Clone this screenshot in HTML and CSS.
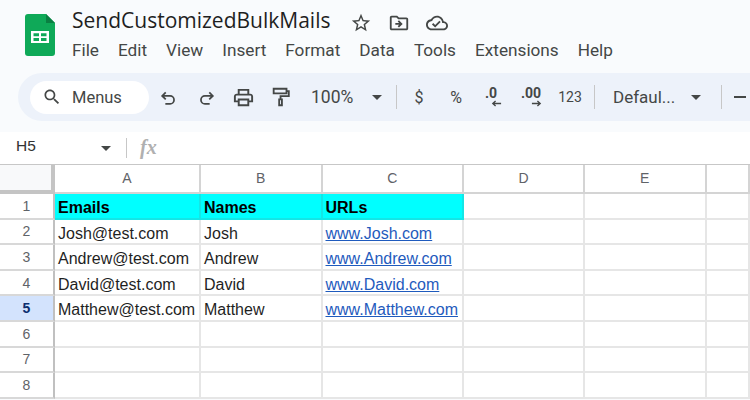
FILE: index.html
```html
<!DOCTYPE html>
<html lang="en">
<head>
    <meta charset="UTF-8">
    <title>SendCustomizedBulkMails</title>
    <link rel="stylesheet" href="styles.css">
</head>
<body>
    <header class="top">
        <svg class="logo" viewBox="0 0 30 42">
            <path d="M3 0h18l9 9v30a3 3 0 0 1-3 3H3a3 3 0 0 1-3-3V3a3 3 0 0 1 3-3z" fill="#0fa958"/>
            <path d="M21 0l9 9h-9z" fill="#0a7f42"/>
            <path d="M6 17h18v12H6zM8.500 19.200v3h5.500v-3zM16 19.200v3h5.500v-3zM8.500 24v3h5.500v-3zM16 24v3h5.500v-3z" fill="#fff" fill-rule="evenodd"/>
        </svg>
        <div class="top-text">
            <div class="title-row">
                <span class="doc-title">SendCustomizedBulkMails</span>
                <svg class="title-icon star" viewBox="0 0 24 24"><path d="M22 9.240l-7.190-.620L12 2 9.190 8.630 2 9.240l5.460 4.730L5.820 21 12 17.270 18.180 21l-1.630-7.030L22 9.240zM12 15.400l-3.760 2.270 1-4.280-3.320-2.880 4.380-.380L12 6.100l1.710 4.040 4.380.380-3.320 2.880 1 4.280L12 15.400z"/></svg>
                <svg class="title-icon" viewBox="0 0 24 24"><path d="M20 6h-8l-2-2H4c-1.100 0-1.990.900-1.990 2L2 18c0 1.100.900 2 2 2h16c1.100 0 2-.900 2-2V8c0-1.100-.900-2-2-2zm0 12H4V6h5.170l2 2H20v10zm-8.010-9l-1.410 1.410L12.160 12H8v2h4.160l-1.590 1.590L11.990 17 16 13.010 11.990 9z"/></svg>
                <svg class="title-icon" viewBox="0 0 24 24"><path d="M19.350 10.040C18.670 6.590 15.640 4 12 4 9.110 4 6.600 5.640 5.350 8.040 2.340 8.360 0 10.910 0 14c0 3.310 2.690 6 6 6h13c2.760 0 5-2.240 5-5 0-2.640-2.050-4.780-4.650-4.960zM19 18H6c-2.210 0-4-1.790-4-4 0-2.050 1.530-3.760 3.560-3.970l1.070-.110.500-.950C8.080 7.140 9.940 6 12 6c2.620 0 4.880 1.860 5.390 4.430l.300 1.500 1.530.110c1.560.100 2.780 1.410 2.780 2.960 0 1.650-1.350 3-3 3zm-9-3.820l-2.090-2.090L6.500 13.500 10 17l6.010-6.010-1.410-1.410z"/></svg>
            </div>
            <nav class="menu">
                <span>File</span>
                <span>Edit</span>
                <span>View</span>
                <span>Insert</span>
                <span>Format</span>
                <span>Data</span>
                <span>Tools</span>
                <span>Extensions</span>
                <span>Help</span>
            </nav>
        </div>
    </header>

    <div class="toolbar">
        <div class="search">
            <svg class="search-icon" viewBox="0 0 24 24"><path d="M15.500 14h-.790l-.280-.270C15.410 12.590 16 11.110 16 9.500 16 5.910 13.090 3 9.500 3S3 5.910 3 9.500 5.910 16 9.500 16c1.610 0 3.090-.590 4.230-1.570l.270.280v.790l5 4.990L20.490 19l-4.990-5zm-6 0C7.010 14 5 11.990 5 9.500S7.010 5 9.500 5 14 7.010 14 9.500 11.990 14 9.500 14z"/></svg>
            <span>Menus</span>
        </div>
        <div class="tool">
            <svg class="line-icon" viewBox="0 0 24 24"><path d="M8.500 14.500L4 10l4.500-4.500M4 10h10a5 5 0 0 1 0 10H8"/></svg>
        </div>
        <div class="tool">
            <svg class="line-icon" viewBox="0 0 24 24"><path d="M15.500 14.500L20 10l-4.500-4.500M20 10H10a5 5 0 0 0 0 10h6"/></svg>
        </div>
        <div class="tool">
            <svg class="fill-icon" viewBox="0 0 24 24"><path d="M19 8h-1V3H6v5H5c-1.660 0-3 1.340-3 3v6h4v4h12v-4h4v-6c0-1.660-1.340-3-3-3zM8 5h8v3H8V5zm8 12v2H8v-4h8v2zm2-2v-2H6v2H4v-4c0-.550.450-1 1-1h14c.550 0 1 .450 1 1v4h-2z"/></svg>
        </div>
        <div class="tool">
            <svg class="roller-icon" viewBox="0 0 24 24"><path d="M4 3h14v5H4zM18 5.500h2.500V11H11.500v3.500M10 14.500h3V21h-3z"/></svg>
        </div>
        <div class="zoom">
            <span>100%</span>
            <i class="caret"></i>
        </div>
        <i class="sep"></i>
        <div class="tool text-tool dollar">$</div>
        <div class="tool text-tool percent">%</div>
        <div class="tool decimal">
            <b>.0</b>
            <svg viewBox="0 0 12 7"><path d="M11 3.500H2M5 .800L2 3.500l3 2.700"/></svg>
        </div>
        <div class="tool decimal">
            <b>.00</b>
            <svg viewBox="0 0 12 7"><path d="M1 3.500h9M7 .800l3 2.700-3 2.700"/></svg>
        </div>
        <div class="tool text-tool small">123</div>
        <i class="sep"></i>
        <div class="font-pick">
            <span>Defaul...</span>
            <i class="caret"></i>
        </div>
        <i class="sep"></i>
        <div class="minus"></div>
    </div>

    <div class="formula">
        <div class="name-box">
            <span>H5</span>
            <i class="caret"></i>
        </div>
        <i class="formula-sep"></i>
        <span class="fx">fx</span>
    </div>

    <div class="sheet">
        <div class="corner"></div>
        <div class="col-head">A</div>
        <div class="col-head">B</div>
        <div class="col-head">C</div>
        <div class="col-head">D</div>
        <div class="col-head">E</div>
        <div class="col-head"></div>

        <div class="row-head">1</div>
        <div class="cell head-cell">Emails</div>
        <div class="cell head-cell">Names</div>
        <div class="cell head-cell">URLs</div>
        <div class="cell"></div><div class="cell"></div><div class="cell"></div>

        <div class="row-head">2</div>
        <div class="cell">Josh@test.com</div>
        <div class="cell">Josh</div>
        <div class="cell"><a href="#">www.Josh.com</a></div>
        <div class="cell"></div><div class="cell"></div><div class="cell"></div>

        <div class="row-head">3</div>
        <div class="cell">Andrew@test.com</div>
        <div class="cell">Andrew</div>
        <div class="cell"><a href="#">www.Andrew.com</a></div>
        <div class="cell"></div><div class="cell"></div><div class="cell"></div>

        <div class="row-head">4</div>
        <div class="cell">David@test.com</div>
        <div class="cell">David</div>
        <div class="cell"><a href="#">www.David.com</a></div>
        <div class="cell"></div><div class="cell"></div><div class="cell"></div>

        <div class="row-head active">5</div>
        <div class="cell">Matthew@test.com</div>
        <div class="cell">Matthew</div>
        <div class="cell"><a href="#">www.Matthew.com</a></div>
        <div class="cell"></div><div class="cell"></div><div class="cell"></div>

        <div class="row-head">6</div>
        <div class="cell"></div><div class="cell"></div><div class="cell"></div>
        <div class="cell"></div><div class="cell"></div><div class="cell"></div>

        <div class="row-head">7</div>
        <div class="cell"></div><div class="cell"></div><div class="cell"></div>
        <div class="cell"></div><div class="cell"></div><div class="cell"></div>

        <div class="row-head">8</div>
        <div class="cell"></div><div class="cell"></div><div class="cell"></div>
        <div class="cell"></div><div class="cell"></div><div class="cell"></div>
    </div>
</body>
</html>
```

FILE: styles.css
```css
body {
    margin: 0;
    width: 750px;
    height: 400px;
    overflow: hidden;
    background-color: #f9fbfd;
    color: #444746;
    font-family: "Open Sans", sans-serif;
}
.top {
    display: flex;
    height: 73px;
    box-sizing: border-box;
    padding: 14px 0 0 25px;
}
.logo {
    width: 30px;
    height: 42px;
}
.top-text {
    margin-left: 17px;
    margin-top: -5px;
}
.title-row {
    display: flex;
    align-items: center;
    height: 28px;
}
.doc-title {
    width: 249px;
    padding-bottom: 6px;
    font-family: "Open Sans", sans-serif;
    font-size: 21px;
    color: #1f1f1f;
    white-space: nowrap;
}
.title-icon {
    width: 22px;
    height: 22px;
    margin-right: 16px;
    fill: #444746;
}
.star {
    margin-left: 29px;
}
.menu {
    display: flex;
    margin-top: 2px;
    font-family: "Roboto", sans-serif;
    font-size: 17.200px;
    line-height: 22px;
}
.menu span {
    margin-right: 19px;
    white-space: nowrap;
}

.toolbar {
    display: flex;
    align-items: center;
    height: 48px;
    margin-left: 18px;
    padding-left: 12px;
    background-color: #edf2fa;
    border-radius: 24px 0 0 24px;
    font-family: "Roboto", sans-serif;
    white-space: nowrap;
}
.search {
    display: flex;
    align-items: center;
    flex: none;
    width: 119px;
    height: 33px;
    margin-right: 1px;
    box-sizing: border-box;
    padding-left: 12px;
    background-color: #fff;
    border-radius: 17px;
    font-size: 16.500px;
}
.search-icon {
    width: 20px;
    height: 20px;
    margin-right: 10px;
    fill: #444746;
}
.tool {
    display: flex;
    flex: none;
    align-items: center;
    justify-content: center;
    width: 37.500px;
}
.line-icon {
    width: 19px;
    height: 19px;
    fill: none;
    stroke: #444746;
    stroke-width: 2.200;
}
.roller-icon {
    width: 22px;
    height: 22px;
    fill: none;
    stroke: #444746;
    stroke-width: 2;
}
.fill-icon {
    width: 23px;
    height: 23px;
    fill: #444746;
}
.zoom {
    display: flex;
    align-items: center;
    flex: none;
    width: 96px;
    box-sizing: border-box;
    padding-left: 11px;
    font-size: 17.500px;
}
.zoom .caret {
    margin-left: 18.500px;
}
.caret {
    flex: none;
    width: 0;
    height: 0;
    border-top: 5px solid #444746;
    border-left: 5.500px solid transparent;
    border-right: 5.500px solid transparent;
}
.sep {
    flex: none;
    width: 1px;
    height: 24px;
    background-color: #c7c7c7;
}
.text-tool {
    font-size: 16px;
}
.dollar {
    width: 44px;
}
.percent {
    width: 30px;
}
.small {
    width: 38px;
    margin-right: 5px;
    font-size: 14px;
}
.decimal {
    flex-direction: column;
    width: 40px;
    font-size: 14px;
    line-height: 12px;
}
.decimal svg {
    width: 11px;
    height: 7px;
    margin-top: 1px;
    margin-left: 11px;
    fill: none;
    stroke: #444746;
    stroke-width: 1.500;
}
.font-pick {
    display: flex;
    align-items: center;
    flex: none;
    width: 126px;
    box-sizing: border-box;
    padding-left: 18px;
    font-size: 17px;
}
.font-pick .caret {
    margin-left: 16px;
}
.minus {
    flex: none;
    width: 12px;
    height: 2px;
    margin-left: 12px;
    background-color: #444746;
}

.formula {
    display: flex;
    align-items: center;
    height: 32px;
    margin-top: 11px;
    background-color: #fff;
}
.name-box {
    display: flex;
    align-items: center;
    width: 113px;
    box-sizing: border-box;
    padding-left: 16px;
    font-family: "Liberation Sans", sans-serif;
    font-size: 15.500px;
    color: #333;
}
.name-box span {
    width: 85px;
    padding-bottom: 4px;
}
.formula-sep {
    width: 1px;
    height: 20px;
    margin-left: 13px;
    background-color: #c7c7c7;
}
.fx {
    margin-left: 13px;
    padding-bottom: 2px;
    font-family: "Liberation Serif", serif;
    font-size: 20px;
    font-style: italic;
    font-weight: bold;
    color: #b0b0b0;
}

.sheet {
    display: grid;
    grid-template-columns: 55px 146px 121.500px 141.500px 121px 121.500px 43px;
    grid-template-rows: 29px repeat(8, 25.600px);
    background-color: #fff;
    border-top: 1px solid #c7c7c7;
    font-family: "Liberation Sans", sans-serif;
    color: #1f1f1f;
}
.corner {
    box-sizing: border-box;
    background-color: #f8f9fa;
    border-right: 4px solid #c4c4c4;
    border-bottom: 4px solid #c4c4c4;
}
.col-head {
    display: flex;
    align-items: center;
    justify-content: center;
    padding-bottom: 2px;
    box-sizing: border-box;
    border-right: 2px solid #d4d4d4;
    border-bottom: 2px solid #d4d4d4;
    font-size: 14px;
    color: #5f6368;
}
.row-head {
    display: flex;
    align-items: center;
    justify-content: center;
    box-sizing: border-box;
    border-right: 2px solid #c0c0c0;
    border-bottom: 2px solid #d8d8d8;
    font-size: 14px;
    color: #5f6368;
}
.active {
    background-color: #d3e3fd;
    font-weight: bold;
    color: #0b2e6f;
}
.cell {
    box-sizing: border-box;
    padding: 1px 0 0 3px;
    border-right: 2px solid #e6e6e6;
    border-bottom: 2px solid #e6e6e6;
    font-size: 16px;
    line-height: 25px;
    white-space: nowrap;
    overflow: hidden;
}
.head-cell {
    background-color: #00ffff;
    border-right-color: #14e6e6;
    border-bottom-color: #14e6e6;
    font-weight: bold;
    color: #000;
}
.cell a {
    color: #1f5bbd;
}
```
